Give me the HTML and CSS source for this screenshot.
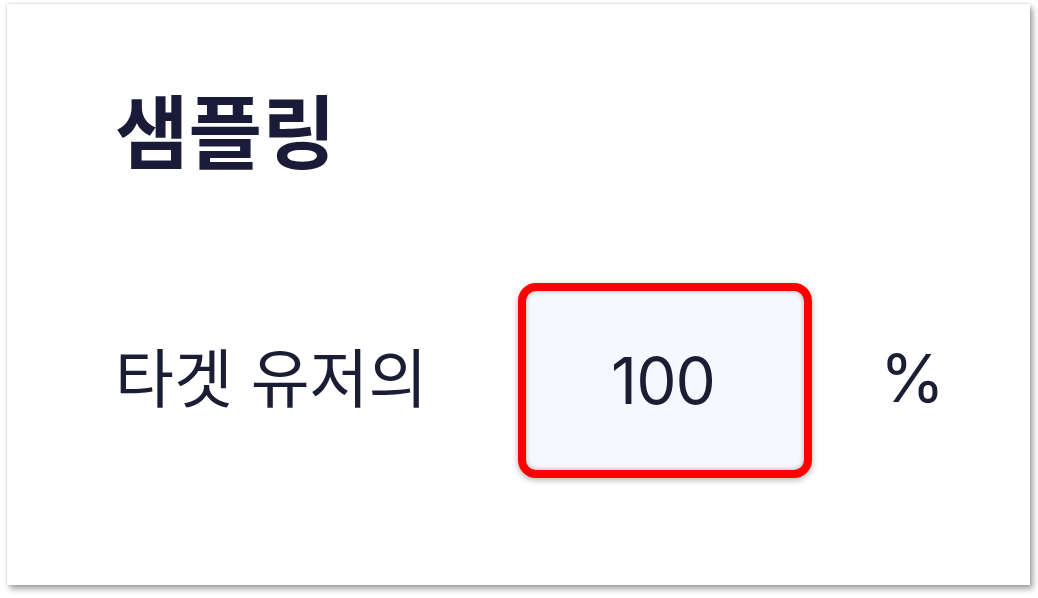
FILE: index.html
```html
<!DOCTYPE html>
<html lang="ko">
<head>
<meta charset="utf-8">
<link rel="stylesheet" href="styles.css">
</head>
<body>
<div class="card">
  <h2 class="title">샘플링</h2>
  <div class="row">
    <span class="label">타겟 유저의</span>
    <div class="field"><span class="value">100</span></div>
    <span class="unit">%</span>
  </div>
</div>
</body>
</html>
```

FILE: styles.css
```css
html, body { margin: 0; padding: 0; background: #ffffff; }
body {
  width: 1038px; height: 598px; overflow: hidden;
  font-family: "Noto Sans CJK KR", "Noto Sans", sans-serif;
  color: #1b1d35;
}
.card {
  margin: 4px 0 0 7px;
  width: 1023px; height: 581px;
  box-sizing: border-box;
  background: #fff;
  box-shadow: 0 0 3px rgba(0,0,0,0.18), 3px 4px 6px rgba(0,0,0,0.35);
  padding: 73px 0 0 108px;
}
.title {
  margin: 0;
  font-size: 80px;
  font-weight: 700;
  line-height: 100px;
  color: #191b38;
}
.row {
  display: flex; align-items: center;
  margin-top: 106px;
}
.label {
  font-size: 64px; line-height: 80px; font-weight: 400;
  width: 403px;
  margin-top: -14px;
}
.field {
  width: 294px; height: 195px; box-sizing: border-box;
  border: 8px solid #fe0000; border-radius: 18px;
  background: #f7f8fd;
  box-shadow: 0 2px 6px rgba(0,0,0,0.3), inset 0 0 5px rgba(0,0,0,0.3);
  display: flex; align-items: center; justify-content: center;
}
.value {
  font-family: "Inter", sans-serif;
  font-size: 64px; font-weight: 400; color: #1b1d35;
  letter-spacing: -1px;
  margin-left: -4px;
}
.unit {
  margin-left: 68px;
  margin-top: -6px;
  font-family: "Inter", sans-serif;
  font-size: 66px; color: #1b1d35;
}
```
